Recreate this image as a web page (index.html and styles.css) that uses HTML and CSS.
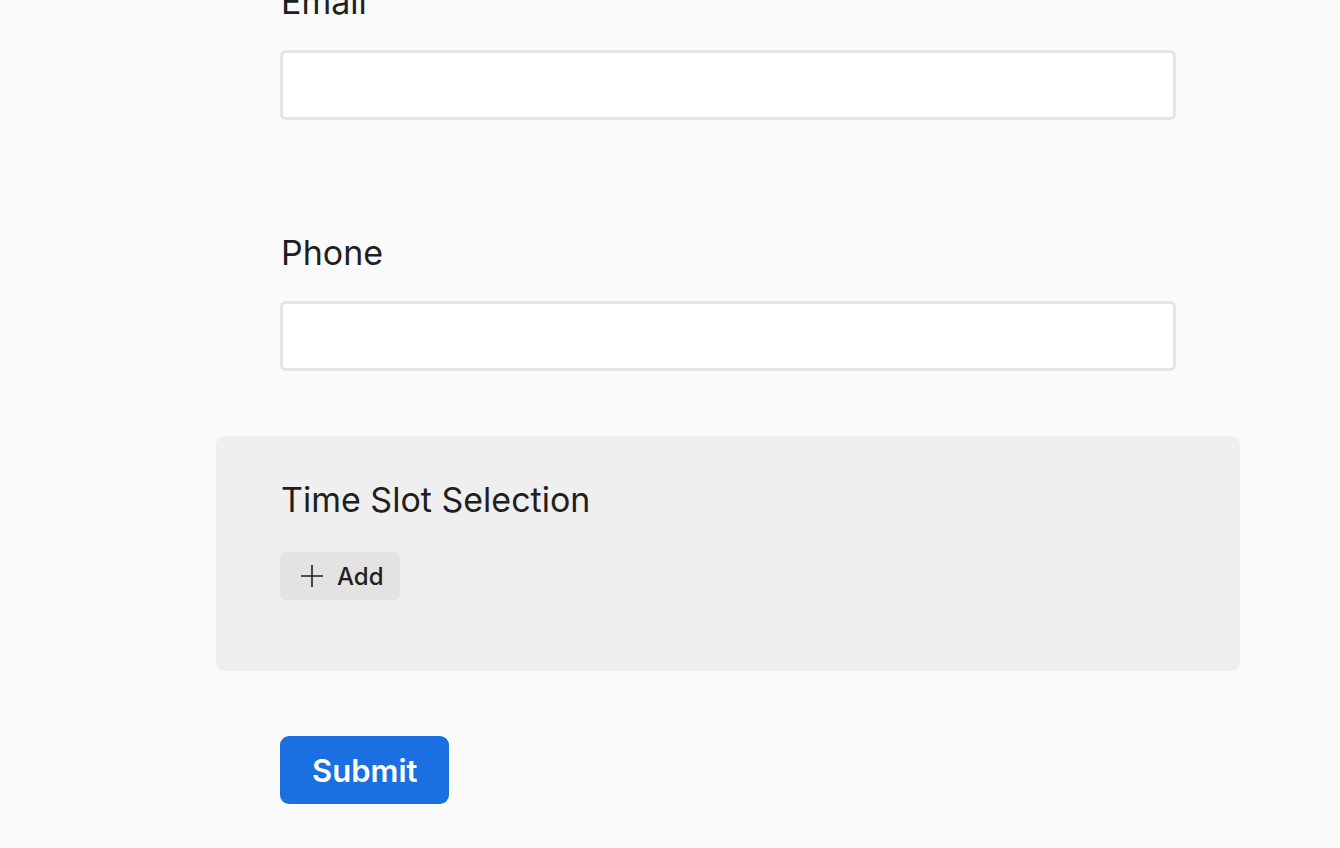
FILE: index.html
```html
<!DOCTYPE html>
<html>
<head>
<meta charset="utf-8">
<link rel="stylesheet" href="styles.css">
</head>
<body>
<form class="form">
  <div class="field field-email">
    <label class="label">Email</label>
    <input class="input" type="email">
  </div>
  <div class="field field-phone">
    <label class="label">Phone</label>
    <input class="input" type="tel">
  </div>
  <section class="slots">
    <h2 class="slots-title">Time Slot Selection</h2>
    <button type="button" class="add-btn">
      <svg class="plus" width="24" height="24" viewBox="0 0 24 24" fill="none" stroke="#1f1f1f" stroke-width="1.6"><path d="M12 1v22M1 12h22"/></svg>
      <span>Add</span>
    </button>
  </section>
  <div class="actions">
    <button type="submit" class="submit-btn">Submit</button>
  </div>
</form>
</body>
</html>
```
FILE: styles.css
```css
html, body {
  margin: 0;
  padding: 0;
  background: #fafafa;
  font-family: Inter, "Liberation Sans", sans-serif;
  color: #1f1f1f;
  overflow: hidden;
}
.form {
  width: 1024px;
  margin: -18px 0 0 216px;
  display: flex;
  flex-direction: column;
}
.field {
  padding: 0 64px;
  display: flex;
  flex-direction: column;
}
.field-email {
  margin-bottom: 113px;
}
.field-phone {
  margin-bottom: 65px;
}
.label {
  display: block;
  font-size: 34px;
  line-height: 40px;
  margin: 0 0 28px 1px;
}
.input {
  box-sizing: border-box;
  width: 896px;
  height: 70px;
  margin: 0;
  border: 3px solid #e5e5e5;
  border-radius: 6px;
  background: #fff;
  outline: none;
}
.slots {
  background: #efefef;
  border-radius: 9px;
  padding: 44px 64px 71px;
  display: flex;
  flex-direction: column;
  align-items: flex-start;
}
.slots-title {
  margin: 0 0 32px 1px;
  font-size: 34px;
  line-height: 40px;
  font-weight: 400;
}
.add-btn {
  display: flex;
  align-items: center;
  gap: 13px;
  height: 48px;
  padding: 0 16px 0 20px;
  border: none;
  border-radius: 5px;
  background: #e3e3e3;
  font-family: inherit;
  font-size: 24px;
  font-weight: 500;
  color: #1f1f1f;
}
.plus {
  display: block;
}
.actions {
  margin-top: 65px;
  padding-left: 64px;
}
.submit-btn {
  height: 68px;
  padding: 0 32px;
  border: none;
  border-radius: 9px;
  background: #1a6fe1;
  color: #fff;
  font-family: inherit;
  font-size: 31px;
  font-weight: 600;
}
```
